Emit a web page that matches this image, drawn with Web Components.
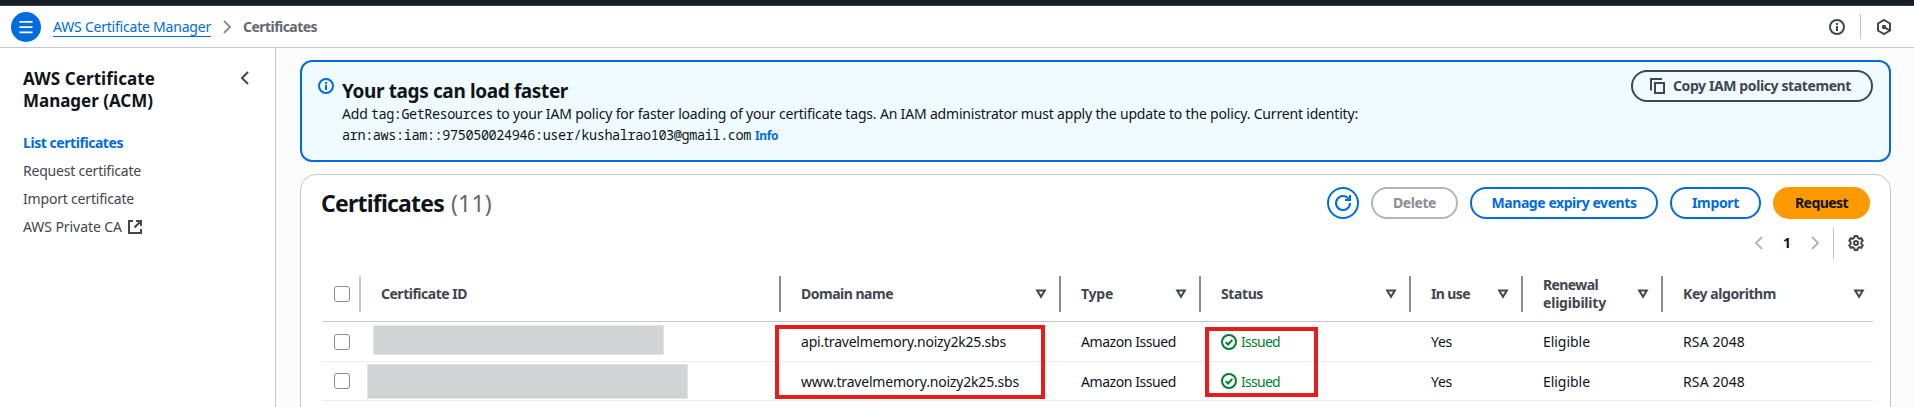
<!DOCTYPE html>
<html lang="en">
<head>
<meta charset="utf-8">
<title>AWS Certificate Manager</title>
<style>
html,body{margin:0;height:407px;overflow:hidden}
body{font:14px/20px "Noto Sans","Open Sans",sans-serif;color:#0f141a;background:#fff}
</style>
</head>
<body>
<acm-app></acm-app>
<script>
const define=(name,html,setup)=>customElements.define(name,class extends HTMLElement{
  connectedCallback(){
    if(this.shadowRoot)return;
    const t=document.createElement('template');
    t.innerHTML=typeof html==='function'?html(this):html;
    this.attachShadow({mode:'open'}).append(t.content.cloneNode(true));
    if(setup)setup(this,this.shadowRoot);
  }
});

/* A run of text tracked so that it fills the width given in "w". */
define('ui-text',`<style>:host{display:inline-block;white-space:pre;vertical-align:baseline}span{display:inline-block}</style><span><slot></slot></span>`,(el,root)=>{
  const w=+el.getAttribute('w'),s=root.querySelector('span');
  if(!w)return;
  const n=el.textContent.length,nat=s.getBoundingClientRect().width;
  el.style.width=w+'px';
  s.style.letterSpacing=((w-nat)/n).toFixed(3)+'px';
});

const icons={
  menu:'<path d="M.5 2h15M.5 8h15M.5 14h15"/>',
  right:'<path d="M5 2l6 6-6 6"/>',
  left:'<path d="M11 2L5 8l6 6"/>',
  info:'<circle cx="8" cy="8" r="7"/><path d="M8 12V7M8 4v2"/>',
  external:'<path d="M6 2H2v12h12V10M9 2h5v5M14 2L7.500 8.500"/>',
  copy:'<path d="M2 12.500V1h11"/><path d="M6 5h9v10H6z"/>',
  refresh:'<path d="M15 8A7 7 0 1 1 13.500 3.700M15 0v5h-5"/>',
  check:'<circle cx="8" cy="8" r="7"/><path d="M4.800 8.200l2.300 2.300 4.200-4.600"/>',
  sort:'<path d="M4.200 4.500h7.600L8 10.800z"/>',
  settings:'<path d="M6.300 2.700L6.700 1h2.600l.4 1.700 1.900 1.100 1.700-.5 1.400 2.300L13.400 7v2l1.300 1.400-1.400 2.300-1.700-.5-1.900 1.100-.4 1.700H6.700l-.4-1.700-1.900-1.100-1.700.5-1.400-2.300L2.600 9V7L1.300 5.600l1.400-2.300 1.700.5z"/><circle cx="8" cy="8" r="2"/>',
  hex:'<path d="M8 1l6 3.500v7L8 15l-6-3.500v-7z"/><path d="M8 8l5.500 3.300"/><circle cx="8" cy="8" r="1.200" fill="currentColor"/>'
};
define('ui-icon',el=>`<style>:host{display:block;flex:none;width:16px;height:16px}svg{display:block;width:100%;height:100%;overflow:visible}</style><svg viewBox="0 0 16 16" fill="none" stroke="currentColor" stroke-width="${el.getAttribute('sw')||2}">${icons[el.getAttribute('name')]}</svg>`);

define('ui-button',`<style>
:host{display:flex;box-sizing:border-box;height:32px;border:2px solid #006ce0;border-radius:16px;align-items:center;justify-content:center;gap:8px;color:#006ce0;font-weight:700;flex:none}
:host([kind=disabled]){border-color:#b4b4bb;color:#8c8c94}
:host([kind=primary]){border-color:#f90;background:#f90;color:#0f141a}
:host([kind=dark]){border-color:#424650;color:#424650;padding-right:4px}
</style><slot></slot>`);

define('acm-header',`<style>
:host{display:flex;box-sizing:border-box;height:48px;border-top:5px solid #161d26;border-bottom:1px solid #c6c6cd;align-items:center;padding:1px 22px 0 11px;background:#fff;box-shadow:inset 0 1px #41364a}
.menu{width:30px;height:30px;border-radius:50%;background:#006ce0;color:#fff;display:grid;place-items:center}
.menu ui-icon{width:14px;height:14px}
.link{margin-left:12px;color:#006ce0;border-bottom:1px solid #006ce0;line-height:18px;height:18px;margin-top:1px}
.sep{margin-left:8px;color:#8c8c94}
.here{margin-left:8px;color:#656871;font-weight:700}
.tools{margin-left:auto;display:flex;align-items:center;color:#424650}
i{width:1px;height:25px;background:#c6c6cd;margin:0 15px 0 15px}
</style>
<div class="menu"><ui-icon name="menu"></ui-icon></div>
<ui-text class="link" w="158">AWS Certificate Manager</ui-text>
<ui-icon class="sep" name="right"></ui-icon>
<ui-text class="here" w="74">Certificates</ui-text>
<div class="tools"><ui-icon name="info"></ui-icon><i></i><ui-icon name="hex"></ui-icon></div>`);

define('acm-sidebar',`<style>
:host{display:block;box-sizing:border-box;width:276px;border-right:1px solid #c6c6cd;padding:20px 22px 0 23px;background:#fff;color:#424650}
.head{display:flex;justify-content:space-between;color:#0f141a;font-size:17px;font-weight:700;line-height:22px}
.head ui-text{display:block}
.head ui-icon{margin-top:2px;color:#424650}
nav{display:flex;flex-direction:column;gap:8px;margin-top:21px}
nav div{display:flex;align-items:center;gap:5px;height:20px}
.on{color:#006ce0;font-weight:700}
</style>
<div class="head"><div><ui-text w="132">AWS Certificate</ui-text><ui-text w="130">Manager (ACM)</ui-text></div><ui-icon name="left"></ui-icon></div>
<nav><div class="on"><ui-text w="100">List certificates</ui-text></div>
<div><ui-text w="118">Request certificate</ui-text></div>
<div><ui-text w="111">Import certificate</ui-text></div>
<div><ui-text w="99">AWS Private CA</ui-text><ui-icon name="external"></ui-icon></div></nav>`);

define('acm-alert',`<style>
:host{display:flex;flex:none;box-sizing:border-box;height:102px;border:2px solid #006ce0;border-radius:12px;background:#f0fbff;padding:8px 16px}
.info{color:#006ce0;margin-top:8px}
.body{margin:8px 0 0 8px;flex:1}
h2{margin:0;font-size:19px;line-height:26px;font-weight:700}
p{margin:0;display:flex;align-items:baseline;height:21px}
code{font-family:"Noto Sans Mono","DejaVu Sans Mono",monospace;font-size:13.500px}
.more{font-size:12px;font-weight:700;color:#006ce0;margin-left:4px}
</style>
<ui-icon class="info" name="info"></ui-icon>
<div class="body"><h2><ui-text w="226">Your tags can load faster</ui-text></h2>
<p><ui-text w="29">Add </ui-text><code><ui-text w="122">tag:GetResources</ui-text></code><ui-text w="865"> to your IAM policy for faster loading of your certificate tags. An IAM administrator must apply the update to the policy. Current identity:</ui-text></p>
<p><code><ui-text w="409">arn:aws:iam::975050024946:user/kushalrao103@gmail.com</ui-text></code><ui-text class="more" w="23">Info</ui-text></p></div>
<ui-button kind="dark" style="width:242px"><ui-icon name="copy"></ui-icon><ui-text w="178">Copy IAM policy statement</ui-text></ui-button>`);

define('ui-check',`<style>:host{display:block;box-sizing:border-box;width:16px;height:16px;border:1px solid #8c8c94;border-radius:3px;background:#fff}</style>`);

define('acm-row',`<style>
:host{display:grid;position:relative;box-sizing:border-box;grid-template-columns:39px 420px 280px 140px 210px 112px 140px 210px;align-items:center;border-bottom:1px solid #ebebf0}
</style><slot></slot>`);

define('acm-th',`<style>
:host{display:flex;box-sizing:border-box;height:36px;align-items:center;justify-content:space-between;padding:0 10px 0 20px;border-right:2px solid #8c8c94;font-weight:700;line-height:18px;color:#424650;margin-top:1px}
:host([first]){padding:0 0 0 12px;border-color:#c6c6cd}
:host([last]){border:0;padding-right:6px}
</style><div><slot></slot></div><slot name="sort"></slot>`);

define('acm-td',`<style>:host{display:flex;align-items:center;gap:4px;padding-left:20px;line-height:20px}:host([first]){padding-left:12px}:host([ok]){color:#00802f}::slotted(ui-text){margin-top:1px}</style><slot></slot>`);

define('acm-table',()=>{
  const cols=[['Domain name',92],['Type',32],['Status',42],['In use',39],['Renewal',55],['Key algorithm',93]];
  const th=cols.map(([t,w],i)=>`<acm-th${i===5?' last':''}><ui-text w="${w}">${t}</ui-text>${i===4?'<br><ui-text w="63">eligibility</ui-text>':''}<ui-icon slot="sort" name="sort"></ui-icon></acm-th>`).join('');
  const row=(cls,domain,w)=>`<acm-row class="${cls}"><acm-td first><ui-check></ui-check></acm-td><acm-td class="cover"><b></b></acm-td>
<acm-td><ui-text w="${w}">${domain}</ui-text></acm-td><acm-td><ui-text w="95">Amazon Issued</ui-text></acm-td>
<acm-td ok><ui-icon name="check"></ui-icon><ui-text w="39">Issued</ui-text></acm-td><acm-td><ui-text w="21">Yes</ui-text></acm-td>
<acm-td><ui-text w="47">Eligible</ui-text></acm-td><acm-td><ui-text w="62">RSA 2048</ui-text></acm-td></acm-row>`;
  return `<style>
:host{display:block;position:relative;width:1551px}
.head{height:56px;border-color:#c6c6cd}
.r1{height:40px}.r2{height:39px}
.cover{height:100%;align-items:flex-start}
b{display:block;background:#d1d3d5;border:1px solid #e3e4e5;box-sizing:border-box;flex:none}
.r1 b{width:291px;height:30px;margin:3px 0 0 -8px}
.r2 b{width:321px;height:35px;margin:2px 0 0 -14px}
.mark{position:absolute;box-sizing:border-box;border:4px solid #e81c1c}
.m1{left:453px;top:59px;width:270px;height:74px}
.m2{left:883px;top:61px;width:113px;height:70px}
</style>
<acm-row class="head"><acm-th first><ui-check></ui-check></acm-th><acm-th><ui-text w="86">Certificate ID</ui-text></acm-th>${th}</acm-row>
${row('r1','api.travelmemory.noizy2k25.sbs',205)}${row('r2','www.travelmemory.noizy2k25.sbs',218)}
<div class="mark m1"></div><div class="mark m2"></div>`;
});

define('acm-card',`<style>
:host{display:block;box-sizing:border-box;height:260px;border:1px solid #c6c6cd;border-radius:16px;background:#fff;padding:12px 20px 0 21px}
.top{display:flex;align-items:center;gap:12px}
h1{margin:0 auto 0 -1px;font-size:23px;line-height:30px;font-weight:700;display:flex;gap:7px}
h1 .n{font-weight:400;color:#656871}
.round{width:32px}
.pages{display:flex;align-items:center;justify-content:flex-end;height:32px;margin:8px 6px 7px 0;color:#b4b4bb}
.pages ui-text{color:#0f141a;font-weight:700;margin:0 16px;width:8px}
i{width:1px;height:32px;background:#c6c6cd;margin:0 14px 0 10px}
.gear{color:#424650}
</style>
<div class="top"><h1><ui-text w="123">Certificates</ui-text><ui-text class="n" w="41">(11)</ui-text></h1>
<ui-button class="round"><ui-icon name="refresh"></ui-icon></ui-button>
<ui-button kind="disabled" style="width:87px"><ui-text w="43">Delete</ui-text></ui-button>
<ui-button style="width:188px"><ui-text w="145">Manage expiry events</ui-text></ui-button>
<ui-button style="width:91px"><ui-text w="47">Import</ui-text></ui-button>
<ui-button kind="primary" style="width:97px"><ui-text w="53">Request</ui-text></ui-button></div>
<div class="pages"><ui-icon name="left"></ui-icon><ui-text>1</ui-text><ui-icon name="right"></ui-icon><i></i><ui-icon class="gear" name="settings"></ui-icon></div>
<acm-table></acm-table>`);

define('acm-app',`<style>
:host{display:flex;flex-direction:column;height:407px;overflow:hidden}
.body{display:flex;flex:1;min-height:0}
main{flex:1;min-width:0;background:#fcfcfd;padding:12px 23px 0 24px;display:flex;flex-direction:column;gap:12px}
acm-card{flex:none}
</style>
<acm-header></acm-header><div class="body"><acm-sidebar></acm-sidebar><main><acm-alert></acm-alert><acm-card></acm-card></main></div>`);
</script>
</body>
</html>
